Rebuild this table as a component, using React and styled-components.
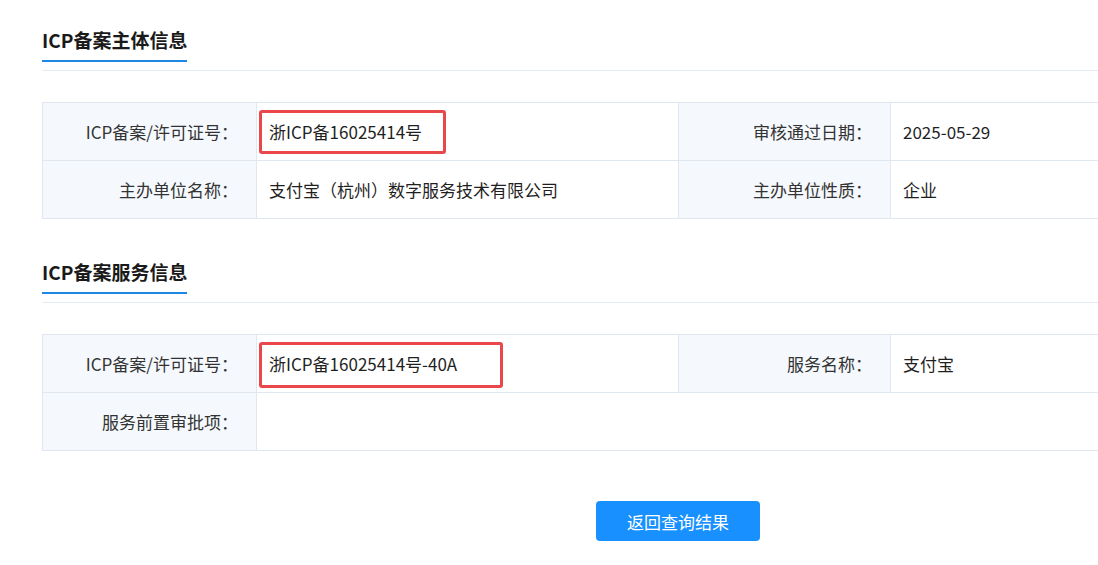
import React from 'react';
import styled, { createGlobalStyle } from 'styled-components';

const GlobalStyle = createGlobalStyle`
  html, body {
    margin: 0;
    padding: 0;
    background: #fff;
    overflow: hidden;
  }
  body {
    font-family: "Noto Sans CJK SC", "Noto Sans", sans-serif;
    color: #222;
  }
`;

const Page = styled.div`
  width: 1272px;
  padding: 27px 0 0 42px;
`;

const SectionHeader = styled.div`
  border-bottom: 1px solid #e3eaf1;
  padding-bottom: 8px;
`;

const Title = styled.h2`
  display: inline-block;
  margin: 0;
  font-size: 19px;
  line-height: 26px;
  font-weight: 700;
  color: #1a1a1a;
  padding-bottom: 7px;
  border-bottom: 2px solid #1d87e4;
`;

const Section = styled.section`
  margin-top: ${p => p.$top || 0}px;
`;

const Table = styled.table`
  width: 1272px;
  margin-top: 31px;
  border-collapse: collapse;
  table-layout: fixed;
  font-size: 17px;
`;

const Row = styled.tr`
  height: 58px;
`;

const Label = styled.th`
  box-sizing: border-box;
  width: ${p => p.$w}px;
  background: #f5f9fd;
  border: 1px solid #e1e7ee;
  text-align: right;
  font-weight: 400;
  color: #333;
  padding: 0 18px 0 0;
  white-space: nowrap;
`;

const Value = styled.td`
  box-sizing: border-box;
  position: relative;
  width: ${p => p.$w}px;
  border: 1px solid #e1e7ee;
  padding: 0 0 0 12px;
  color: #1f1f1f;
  white-space: nowrap;
`;

const Highlight = styled.span`
  position: absolute;
  left: 2px;
  top: 7px;
  width: ${p => p.$w}px;
  height: ${p => p.$h}px;
  border: 3px solid #e9474a;
  border-radius: 3px;
  box-sizing: border-box;
  pointer-events: none;
`;

const Footer = styled.div`
  display: flex;
  justify-content: center;
  padding-top: 50px;
`;

const BackButton = styled.button`
  width: 164px;
  height: 40px;
  border: none;
  border-radius: 4px;
  background: #1890ff;
  color: #fff;
  font-family: inherit;
  font-size: 17px;
  cursor: pointer;

  &:hover {
    background: #40a9ff;
  }
`;

const App = () => {
  return (
    <>
      <GlobalStyle />
      <Page>
        <Section>
          <SectionHeader>
            <Title>ICP备案主体信息</Title>
          </SectionHeader>
          <Table>
            <tbody>
              <Row>
                <Label $w={214}>ICP备案/许可证号：</Label>
                <Value $w={422}>
                  浙ICP备16025414号
                  <Highlight $w={187} $h={44} />
                </Value>
                <Label $w={212}>审核通过日期：</Label>
                <Value $w={424}>2025-05-29</Value>
              </Row>
              <Row>
                <Label $w={214}>主办单位名称：</Label>
                <Value $w={422}>支付宝（杭州）数字服务技术有限公司</Value>
                <Label $w={212}>主办单位性质：</Label>
                <Value $w={424}>企业</Value>
              </Row>
            </tbody>
          </Table>
        </Section>

        <Section $top={40}>
          <SectionHeader>
            <Title>ICP备案服务信息</Title>
          </SectionHeader>
          <Table>
            <tbody>
              <Row>
                <Label $w={214}>ICP备案/许可证号：</Label>
                <Value $w={422}>
                  浙ICP备16025414号-40A
                  <Highlight $w={244} $h={46} />
                </Value>
                <Label $w={212}>服务名称：</Label>
                <Value $w={424}>支付宝</Value>
              </Row>
              <Row>
                <Label $w={214}>服务前置审批项：</Label>
                <Value colSpan={3}></Value>
              </Row>
            </tbody>
          </Table>
        </Section>

        <Footer>
          <BackButton>返回查询结果</BackButton>
        </Footer>
      </Page>
    </>
  );
};

export default App;
